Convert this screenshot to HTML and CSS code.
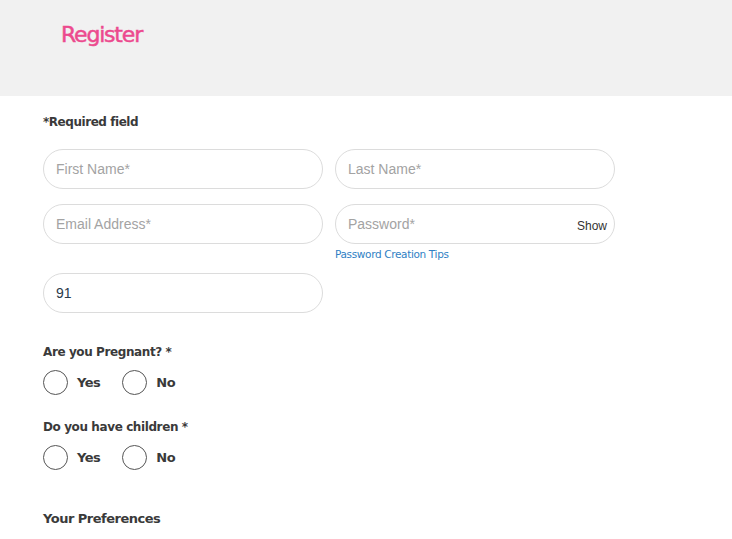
FILE: index.html
```html
<!DOCTYPE html>
<html>
<head>
<meta charset="utf-8">
<link rel="stylesheet" href="styles.css">
</head>
<body>
<header class="top">
  <h1 class="title">Register</h1>
</header>
<main class="form">
  <p class="req">*Required field</p>
  <div class="row">
    <div class="field"><input class="inp" placeholder="First Name*"></div>
    <div class="field"><input class="inp" placeholder="Last Name*"></div>
  </div>
  <div class="row row2">
    <div class="field"><input class="inp" placeholder="Email Address*"></div>
    <div class="field">
      <div class="pw">
        <input class="inp" placeholder="Password*">
        <span class="show">Show</span>
      </div>
      <a class="tips">Password Creation Tips</a>
    </div>
  </div>
  <div class="row row3">
    <div class="field"><input class="inp val" value="91"></div>
  </div>
  <div class="q">
    <p class="qlabel">Are you Pregnant? *</p>
    <div class="opts">
      <label class="opt"><span class="radio"></span>Yes</label>
      <label class="opt"><span class="radio"></span>No</label>
    </div>
  </div>
  <div class="q">
    <p class="qlabel">Do you have children *</p>
    <div class="opts">
      <label class="opt"><span class="radio"></span>Yes</label>
      <label class="opt"><span class="radio"></span>No</label>
    </div>
  </div>
  <h2 class="pref">Your Preferences</h2>
</main>
</body>
</html>
```
FILE: styles.css
```css
* { box-sizing: border-box; }
body { margin: 0; background: #fff; font-family: "Liberation Sans", Arial, sans-serif; }
.top { background: #f1f1f1; height: 96px; padding: 19px 0 0 61px; }
.title { margin: 0; font-family: "DejaVu Sans", sans-serif; font-weight: normal; font-size: 22px; letter-spacing: -1.2px; color: #ec4a8e; line-height: 32px; -webkit-text-stroke: 0.5px #ec4a8e; }
.form { padding: 17px 0 0 43px; }
.req { margin: 0; font-family: "DejaVu Sans", sans-serif; font-weight: bold; font-size: 12px; color: #3a3a3a; letter-spacing: -0.45px; line-height: 18px; }
.row { display: flex; gap: 12px; margin-top: 18px; }
.row2 { margin-top: 15px; }
.row3 { margin-top: 12px; }
.field { width: 280px; display: flex; flex-direction: column; }
.inp { width: 280px; height: 40px; border: 1px solid #dcdcdc; border-radius: 20px; padding: 0 12px; font-family: "Liberation Sans", Arial, sans-serif; font-size: 14px; color: #333; outline: none; background: #fff; }
.inp::placeholder { color: #a3a3a3; }
.val { color: #2b3a4a; }
.pw { position: relative; }
.show { position: absolute; right: 8px; top: 15px; font-size: 12px; color: #333; }
.tips { margin-top: 4px; font-family: "DejaVu Sans", sans-serif; font-size: 10.5px; letter-spacing: -0.35px; color: #2f7fc4; line-height: 13px; }
.q { margin-top: 31px; }
.q + .q { margin-top: 24px; }
.qlabel { margin: 0; font-family: "DejaVu Sans", sans-serif; font-weight: bold; font-size: 12px; color: #3a3a3a; letter-spacing: -0.4px; line-height: 16px; }
.opts { display: flex; gap: 22px; margin-top: 10px; }
.opt { display: flex; align-items: center; gap: 9px; font-family: "DejaVu Sans", sans-serif; font-weight: bold; font-size: 13px; letter-spacing: -0.5px; color: #3a3a3a; }
.radio { width: 25px; height: 25px; border: 1px solid #555; border-radius: 50%; display: inline-block; }
.pref { margin: 40px 0 0; font-family: "DejaVu Sans", sans-serif; font-weight: bold; font-size: 13px; letter-spacing: -0.5px; color: #3a3a3a; line-height: 18px; }
```
